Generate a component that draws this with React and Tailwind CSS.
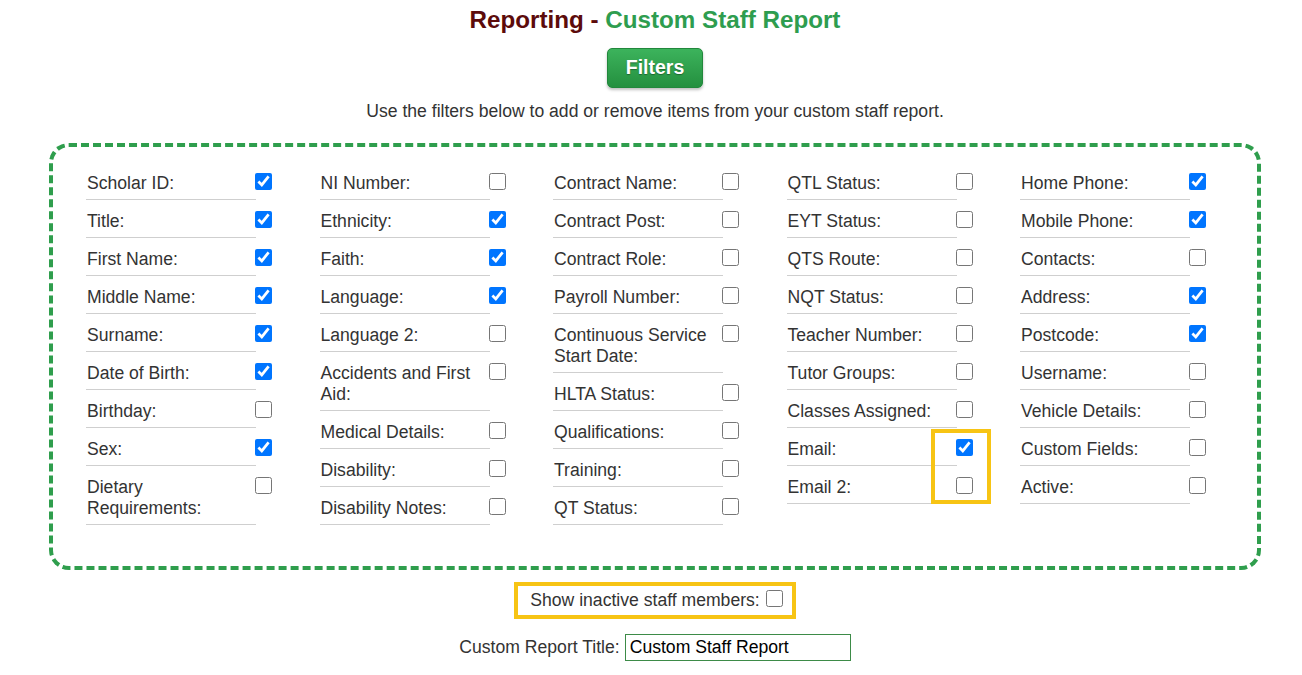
import { useState } from 'react';

const columns = [
  [
    ['Scholar ID:', true],
    ['Title:', true],
    ['First Name:', true],
    ['Middle Name:', true],
    ['Surname:', true],
    ['Date of Birth:', true],
    ['Birthday:', false],
    ['Sex:', true],
    ['Dietary Requirements:', false],
  ],
  [
    ['NI Number:', false],
    ['Ethnicity:', true],
    ['Faith:', true],
    ['Language:', true],
    ['Language 2:', false],
    ['Accidents and First Aid:', false],
    ['Medical Details:', false],
    ['Disability:', false],
    ['Disability Notes:', false],
  ],
  [
    ['Contract Name:', false],
    ['Contract Post:', false],
    ['Contract Role:', false],
    ['Payroll Number:', false],
    ['Continuous Service Start Date:', false],
    ['HLTA Status:', false],
    ['Qualifications:', false],
    ['Training:', false],
    ['QT Status:', false],
  ],
  [
    ['QTL Status:', false],
    ['EYT Status:', false],
    ['QTS Route:', false],
    ['NQT Status:', false],
    ['Teacher Number:', false],
    ['Tutor Groups:', false],
    ['Classes Assigned:', false],
    ['Email:', true],
    ['Email 2:', false],
  ],
  [
    ['Home Phone:', true],
    ['Mobile Phone:', true],
    ['Contacts:', false],
    ['Address:', true],
    ['Postcode:', true],
    ['Username:', false],
    ['Vehicle Details:', false],
    ['Custom Fields:', false],
    ['Active:', false],
  ],
];

function FilterRow({ label, checked }) {
  const [on, setOn] = useState(checked);
  return (
    <div className="flex items-start">
      <div className="w-[170px] border-b border-[#cfcfcf] pt-[11px] pb-[5px] pl-[1px] pr-[2px] leading-[21px]">
        {label}
      </div>
      <input
        type="checkbox"
        checked={on}
        onChange={() => setOn(!on)}
        className="w-[17px] h-[17px] m-0 mt-[11px] -ml-[1px]"
      />
    </div>
  );
}

export default function App() {
  const [showInactive, setShowInactive] = useState(false);

  return (
    <div className="min-h-screen bg-white pl-[8px] text-[17.6px] text-[#333] font-['Liberation_Sans',Arial,sans-serif]">
      <div className="flex flex-col items-center">

        {/* Heading */}
        <h1 className="mt-[6px] text-[24.2px] leading-[28px] font-bold">
          <span className="text-[#5c0b0b]">Reporting - </span>
          <span className="text-[#2e9d4f]">Custom Staff Report</span>
        </h1>

        <button className="mt-[14px] w-[96px] h-[40px] rounded-[5px] bg-gradient-to-b from-[#3cb35c] to-[#24903f] border border-[#22883c] text-white text-[19.5px] font-bold shadow-[0_2px_3px_rgba(0,0,0,0.25)] [text-shadow:0_1px_1px_rgba(0,0,0,0.35)]">
          Filters
        </button>

        <p className="mt-[13px] leading-[21px]">
          Use the filters below to add or remove items from your custom staff report.
        </p>

        {/* Filter grid */}
        <div className="mt-[21px] w-[1212px] border-[4px] border-dashed border-[#2f9e4d] rounded-[20px] pt-[15px] pb-[41px] pl-[33px]">
          <div className="flex">
            {columns.map((col, ci) => (
              <div key={ci} className="w-[233.5px] shrink-0">
                {ci === 3 ? (
                  <>
                    {col.slice(0, 7).map(([label, checked]) => (
                      <FilterRow key={label} label={label} checked={checked} />
                    ))}
                    <div className="relative">
                      {col.slice(7).map(([label, checked]) => (
                        <FilterRow key={label} label={label} checked={checked} />
                      ))}
                      <div className="absolute left-[144px] top-[1px] w-[60px] h-[75px] border-[4px] border-[#f7c414] pointer-events-none" />
                    </div>
                  </>
                ) : (
                  col.map(([label, checked]) => (
                    <FilterRow key={label} label={label} checked={checked} />
                  ))
                )}
              </div>
            ))}
          </div>
        </div>

        {/* Inactive toggle */}
        <div className="mt-[12px] h-[37px] flex items-center border-[4px] border-[#f7c414] pl-[12px] pr-[9px]">
          <span className="leading-[21px]">Show inactive staff members:</span>
          <input
            type="checkbox"
            checked={showInactive}
            onChange={() => setShowInactive(!showInactive)}
            className="w-[17px] h-[17px] m-0 ml-[6px] -mt-[4px]"
          />
        </div>

        {/* Report title */}
        <div className="mt-[15px] flex items-center">
          <label className="leading-[21px] mr-[5px]">Custom Report Title:</label>
          <input
            type="text"
            defaultValue="Custom Staff Report"
            className="w-[226px] h-[27px] border border-[#3d8b48] px-[4px] text-[17.6px] text-black outline-none"
          />
        </div>

      </div>
    </div>
  );
}
